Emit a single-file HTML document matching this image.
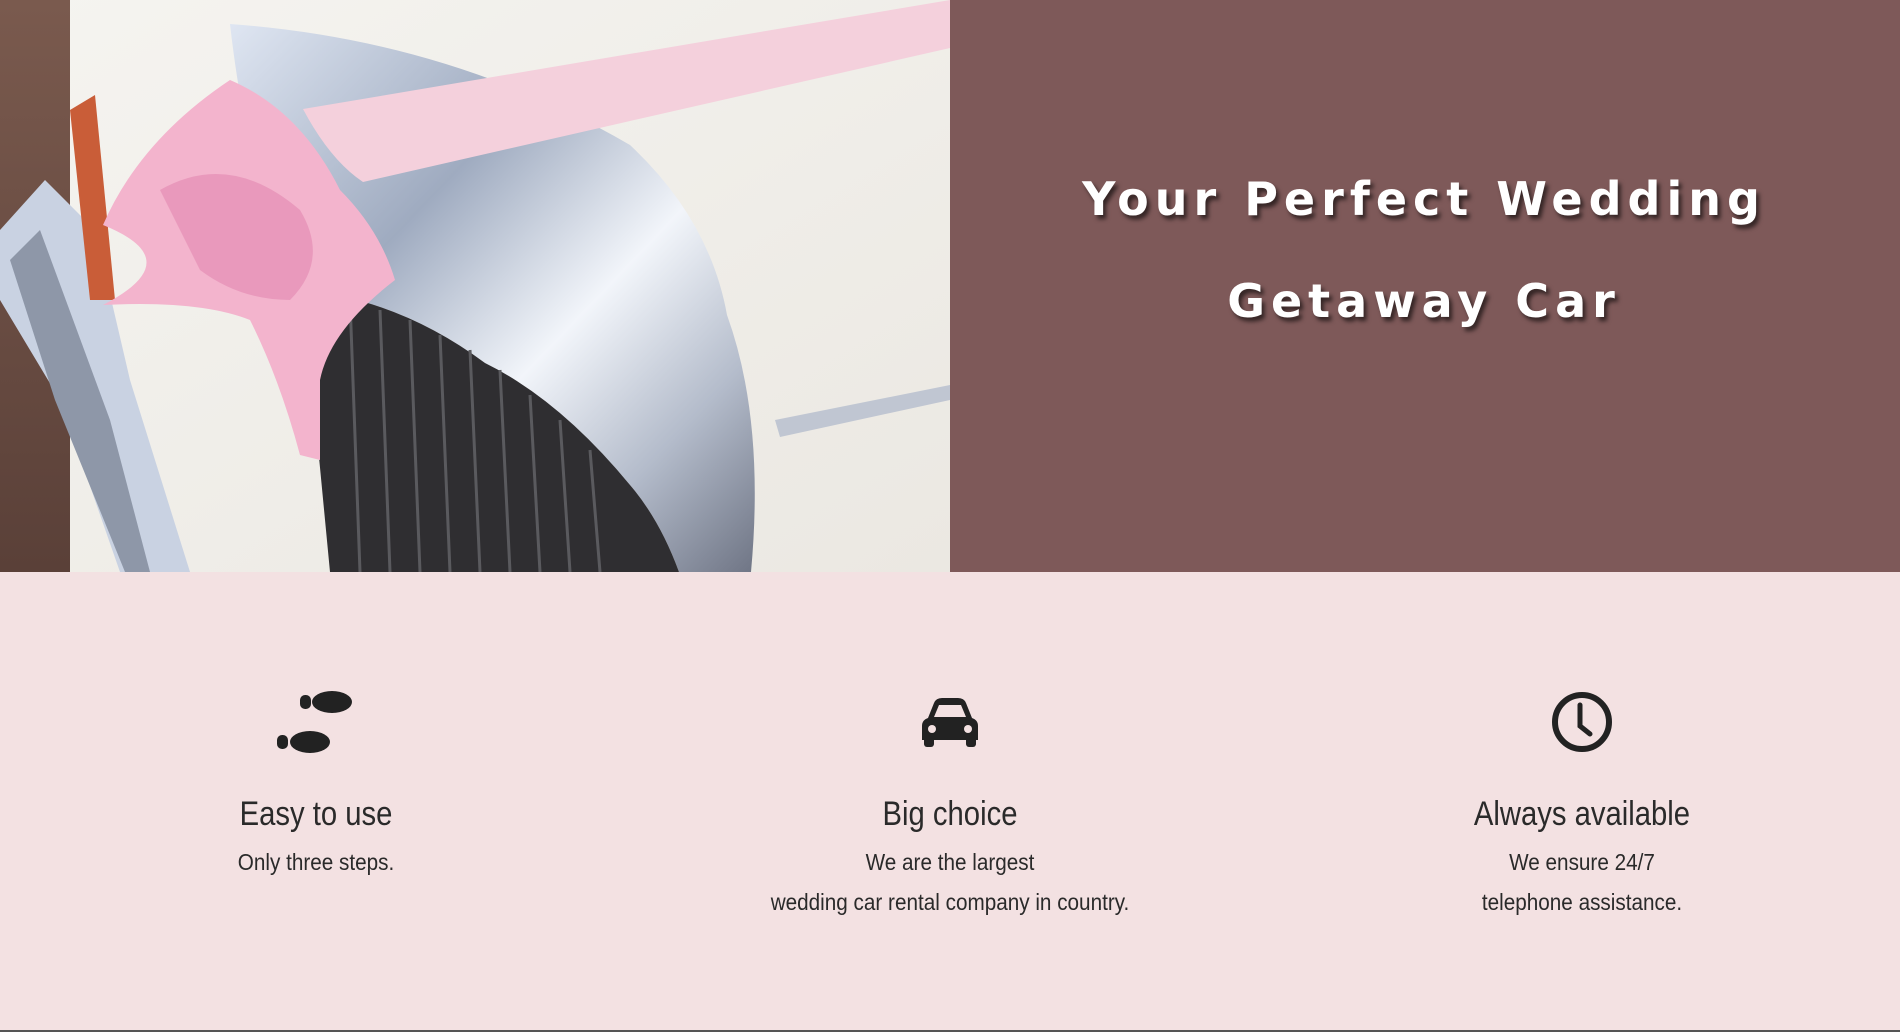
<!DOCTYPE html>
<html><head><meta charset="utf-8"><style>
*{margin:0;padding:0;box-sizing:border-box}
body{width:1900px;height:1032px;overflow:hidden;background:#f3e1e2;font-family:"Liberation Sans",sans-serif;color:#222}
.hero{position:absolute;left:0;top:0;width:1900px;height:572px;background:#7e5959}
.photo{position:absolute;left:0;top:0;width:950px;height:572px}
.title{position:absolute;left:950px;top:0;width:948px;height:572px;text-align:center;color:#fff;font-family:"DejaVu Sans",sans-serif;font-weight:bold;font-size:46px;letter-spacing:6px;text-shadow:3px 4px 4px rgba(0,0,0,.6)}
.title div{position:absolute;left:0;right:0}
.col{position:absolute;top:690px;width:600px;text-align:center}
.col svg{display:block;margin:0 auto}
.col h3{font-weight:normal;font-size:34px;margin-top:40px;line-height:40px;color:#2a2a2a;transform:scaleX(.86)}
.col p{font-size:23px;line-height:40px;margin-top:8px;color:#2a2a2a;transform:scaleX(.9)}
.bl{position:absolute;left:0;top:1030px;width:1900px;height:2px;background:#555}
</style></head><body>
<div class="hero">
<svg class="photo" viewBox="0 0 950 572" preserveAspectRatio="none">
<defs>
<linearGradient id="chr" x1="0" y1="0" x2="1" y2="1"><stop offset="0" stop-color="#dfe6f2"/><stop offset=".35" stop-color="#9fabc0"/><stop offset=".6" stop-color="#f2f5fa"/><stop offset=".8" stop-color="#b4bccb"/><stop offset="1" stop-color="#6f7585"/></linearGradient>
<linearGradient id="wh" x1="0" y1="0" x2="1" y2="1"><stop offset="0" stop-color="#f5f4f0"/><stop offset="1" stop-color="#ebe8e2"/></linearGradient>
<linearGradient id="br" x1="0" y1="0" x2="0" y2="1"><stop offset="0" stop-color="#7a5a4e"/><stop offset="1" stop-color="#5a4038"/></linearGradient>
</defs>
<rect width="950" height="572" fill="url(#wh)"/>
<rect width="70" height="572" fill="url(#br)"/>
<path d="M0 230 L45 180 L95 230 L130 380 L190 572 L120 572 L60 400 L0 300Z" fill="#c9d2e2"/>
<path d="M10 260 L40 230 L110 420 L150 572 L125 572 L55 400Z" fill="#8e97a8"/>
<path d="M70 110 L95 95 L115 300 L90 300Z" fill="#c95d38"/>
<path d="M230 24 Q450 40 630 145 Q710 220 727 315 Q765 420 751 572 L679 572 Q660 520 630 485 Q560 400 485 363 Q400 300 303 290 Q250 200 230 24Z" fill="url(#chr)"/>
<path d="M303 290 Q400 300 485 363 Q560 400 630 485 Q660 520 679 572 L330 572 Z" fill="#2f2e31"/>
<g stroke="#5a5a5e" stroke-width="3"><path d="M350 300 L360 572M380 310 L390 572M410 320 L420 572M440 335 L450 572M470 350 L480 572M500 370 L510 572M530 395 L540 572M560 420 L570 572M590 450 L600 572"/></g>
<path d="M303 109 L950 0 L950 48 L363 182 Q330 160 303 109Z" fill="#f4d0dc"/>
<path d="M103 225 Q140 140 230 80 Q300 110 340 190 Q380 230 395 280 Q330 330 320 380 Q320 430 320 460 L300 455 Q280 380 250 320 Q200 300 103 305 Q190 260 103 225Z" fill="#f3b4cd"/>
<path d="M160 190 Q230 150 300 210 Q330 260 290 300 Q240 300 200 270Z" fill="#e999bc"/>
<path d="M775 420 L950 385 L950 400 L780 437Z" fill="#c0c6d2"/>
</svg>
<div class="title"><div style="top:172px">Your Perfect Wedding</div><div style="top:274px">Getaway Car</div></div>
</div>
<div class="col" style="left:16px">
<svg width="80" height="64" viewBox="0 0 80 64"><ellipse cx="56" cy="12" rx="20" ry="11" fill="#222"/><rect x="24" y="5" width="11" height="14" rx="5" fill="#222"/><ellipse cx="34" cy="52" rx="20" ry="11" fill="#222"/><rect x="1" y="45" width="11" height="14" rx="5" fill="#222"/></svg>
<h3>Easy to use</h3><p>Only three steps.</p></div>
<div class="col" style="left:650px">
<svg width="64" height="64" viewBox="0 0 64 64"><path d="M10 28 L16 13 Q18 8 24 8 L40 8 Q46 8 48 13 L54 28 Q60 30 60 36 L60 50 L4 50 L4 36 Q4 30 10 28Z" fill="#222"/><path d="M16 27 L21 15 L43 15 L48 27Z" fill="#f3e1e2"/><circle cx="14" cy="39" r="4" fill="#f3e1e2"/><circle cx="50" cy="39" r="4" fill="#f3e1e2"/><rect x="6" y="46" width="10" height="11" rx="3" fill="#222"/><rect x="48" y="46" width="10" height="11" rx="3" fill="#222"/></svg>
<h3>Big choice</h3><p>We are the largest<br>wedding car rental company in country.</p></div>
<div class="col" style="left:1282px">
<svg width="64" height="64" viewBox="0 0 64 64"><circle cx="32" cy="32" r="27" fill="none" stroke="#222" stroke-width="6"/><path d="M30 15 L30 36 L40 44" fill="none" stroke="#222" stroke-width="5" stroke-linecap="round"/></svg>
<h3>Always available</h3><p>We ensure 24/7<br>telephone assistance.</p></div>
<div class="bl"></div>
</body></html>
